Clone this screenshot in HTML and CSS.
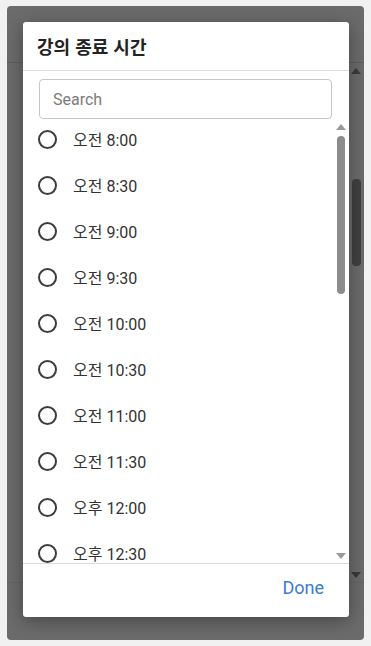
FILE: index.html
```html
<!DOCTYPE html>
<html lang="ko">
<head>
<meta charset="utf-8">
<link rel="stylesheet" href="styles.css">
</head>
<body>
<div class="frame">
  <div class="under">
    <div class="under-head"></div>
    <div class="under-body">
      <div class="under-main"></div>
      <div class="under-bar">
        <span class="tri up dark"></span>
        <div class="under-track"><div class="under-thumb"></div></div>
        <span class="tri down dark"></span>
      </div>
    </div>
    <div class="under-foot"></div>
  </div>
  <div class="dialog">
    <div class="d-head">강의 종료 시간</div>
    <div class="d-search"><input class="search" type="text" placeholder="Search"></div>
    <div class="d-body">
      <div class="list">
        <div class="list-inner">
          <div class="row"><span class="radio"></span><span class="label">오전 8:00</span></div>
          <div class="row"><span class="radio"></span><span class="label">오전 8:30</span></div>
          <div class="row"><span class="radio"></span><span class="label">오전 9:00</span></div>
          <div class="row"><span class="radio"></span><span class="label">오전 9:30</span></div>
          <div class="row"><span class="radio"></span><span class="label">오전 10:00</span></div>
          <div class="row"><span class="radio"></span><span class="label">오전 10:30</span></div>
          <div class="row"><span class="radio"></span><span class="label">오전 11:00</span></div>
          <div class="row"><span class="radio"></span><span class="label">오전 11:30</span></div>
          <div class="row"><span class="radio"></span><span class="label">오후 12:00</span></div>
          <div class="row"><span class="radio"></span><span class="label">오후 12:30</span></div>
        </div>
      </div>
      <div class="bar">
        <span class="tri up"></span>
        <div class="track"><div class="thumb"></div></div>
        <span class="tri down"></span>
      </div>
    </div>
    <div class="d-foot"><span class="done">Done</span></div>
  </div>
</div>
</body>
</html>
```
FILE: styles.css
```css
* { box-sizing: border-box; }
html, body { margin: 0; padding: 0; }
body {
  background: #f1f1f1;
  width: 371px;
  height: 646px;
  padding: 6px 7px 6px 7px;
  font-family: Roboto, "Noto Sans CJK KR", sans-serif;
  overflow: hidden;
}
.frame {
  position: relative;
  width: 357px;
  height: 634px;
  background: #6b6b6b;
  border-radius: 4px;
  overflow: hidden;
}
.under {
  display: flex;
  flex-direction: column;
  height: 100%;
}
.under-head {
  height: 57px;
  border-bottom: 1px solid #5e5e5e;
  flex: none;
}
.under-body {
  flex: 1;
  display: flex;
}
.under-main { flex: 1; }
.under-bar {
  width: 12px;
  margin-right: 2px;
  display: flex;
  flex-direction: column;
  align-items: center;
  padding: 5px 0 4px;
}
.under-track {
  flex: 1;
  width: 100%;
  display: flex;
  justify-content: center;
  padding-top: 105px;
}
.under-thumb {
  width: 9px;
  height: 87px;
  background: #404040;
  border-radius: 4px;
}
.under-foot {
  height: 58px;
  border-top: 1px solid #636363;
  flex: none;
}
.tri {
  width: 0; height: 0;
  border-left: 5px solid transparent;
  border-right: 5px solid transparent;
  flex: none;
}
.tri.up { border-bottom: 6px solid #9a9a9a; }
.tri.down { border-top: 6px solid #9a9a9a; }
.tri.up.dark { border-bottom-color: #3a3a3a; }
.tri.down.dark { border-top-color: #3a3a3a; }

.dialog {
  position: absolute;
  left: 16px;
  top: 16px;
  width: 326px;
  height: 595px;
  background: #fff;
  border-radius: 3px;
  box-shadow: 0 4px 18px rgba(0,0,0,0.35);
  display: flex;
  flex-direction: column;
  overflow: hidden;
}
.d-head {
  height: 49px;
  flex: none;
  border-bottom: 1px solid #dcdcdc;
  padding: 11px 14px 0;
  font-family: "Noto Sans CJK KR", sans-serif;
  font-weight: 700;
  font-size: 18px;
  line-height: 26px;
  color: #222;
}
.d-search {
  flex: none;
  padding: 8px 17px 0 16px;
}
.search {
  display: block;
  width: 100%;
  height: 40px;
  border: 1px solid #c6c6c6;
  border-radius: 4px;
  padding: 0 13px;
  font-family: Roboto, sans-serif;
  font-size: 16px;
  color: #333;
  outline: none;
}
.search::placeholder { color: #7b7b7b; }
.d-body {
  flex: 1;
  display: flex;
  min-height: 0;
  border-bottom: 1px solid #dcdcdc;
}
.list {
  flex: 1;
  overflow: hidden;
}
.list-inner { margin-top: -3px; }
.row {
  height: 46px;
  display: flex;
  align-items: center;
  padding-left: 15px;
}
.radio {
  width: 19px;
  height: 19px;
  border: 2px solid #3c3c3c;
  border-radius: 50%;
  flex: none;
}
.label {
  margin-left: 16px;
  font-size: 16px;
  color: #333;
  font-family: Roboto, "Noto Sans CJK KR", sans-serif;
}
.bar {
  width: 12px;
  margin-right: 2px;
  display: flex;
  flex-direction: column;
  align-items: center;
  padding: 5px 0 4px;
}
.track {
  flex: 1;
  width: 100%;
  display: flex;
  justify-content: center;
  padding-top: 6px;
}
.thumb {
  width: 8px;
  height: 158px;
  background: #8c8c8c;
  border-radius: 4px;
}
.d-foot {
  height: 53px;
  flex: none;
  display: flex;
  align-items: center;
  justify-content: flex-end;
  padding: 0 25px 7px 0;
}
.done {
  color: #3a7bd5;
  font-size: 18px;
  font-family: Roboto, sans-serif;
}
```
